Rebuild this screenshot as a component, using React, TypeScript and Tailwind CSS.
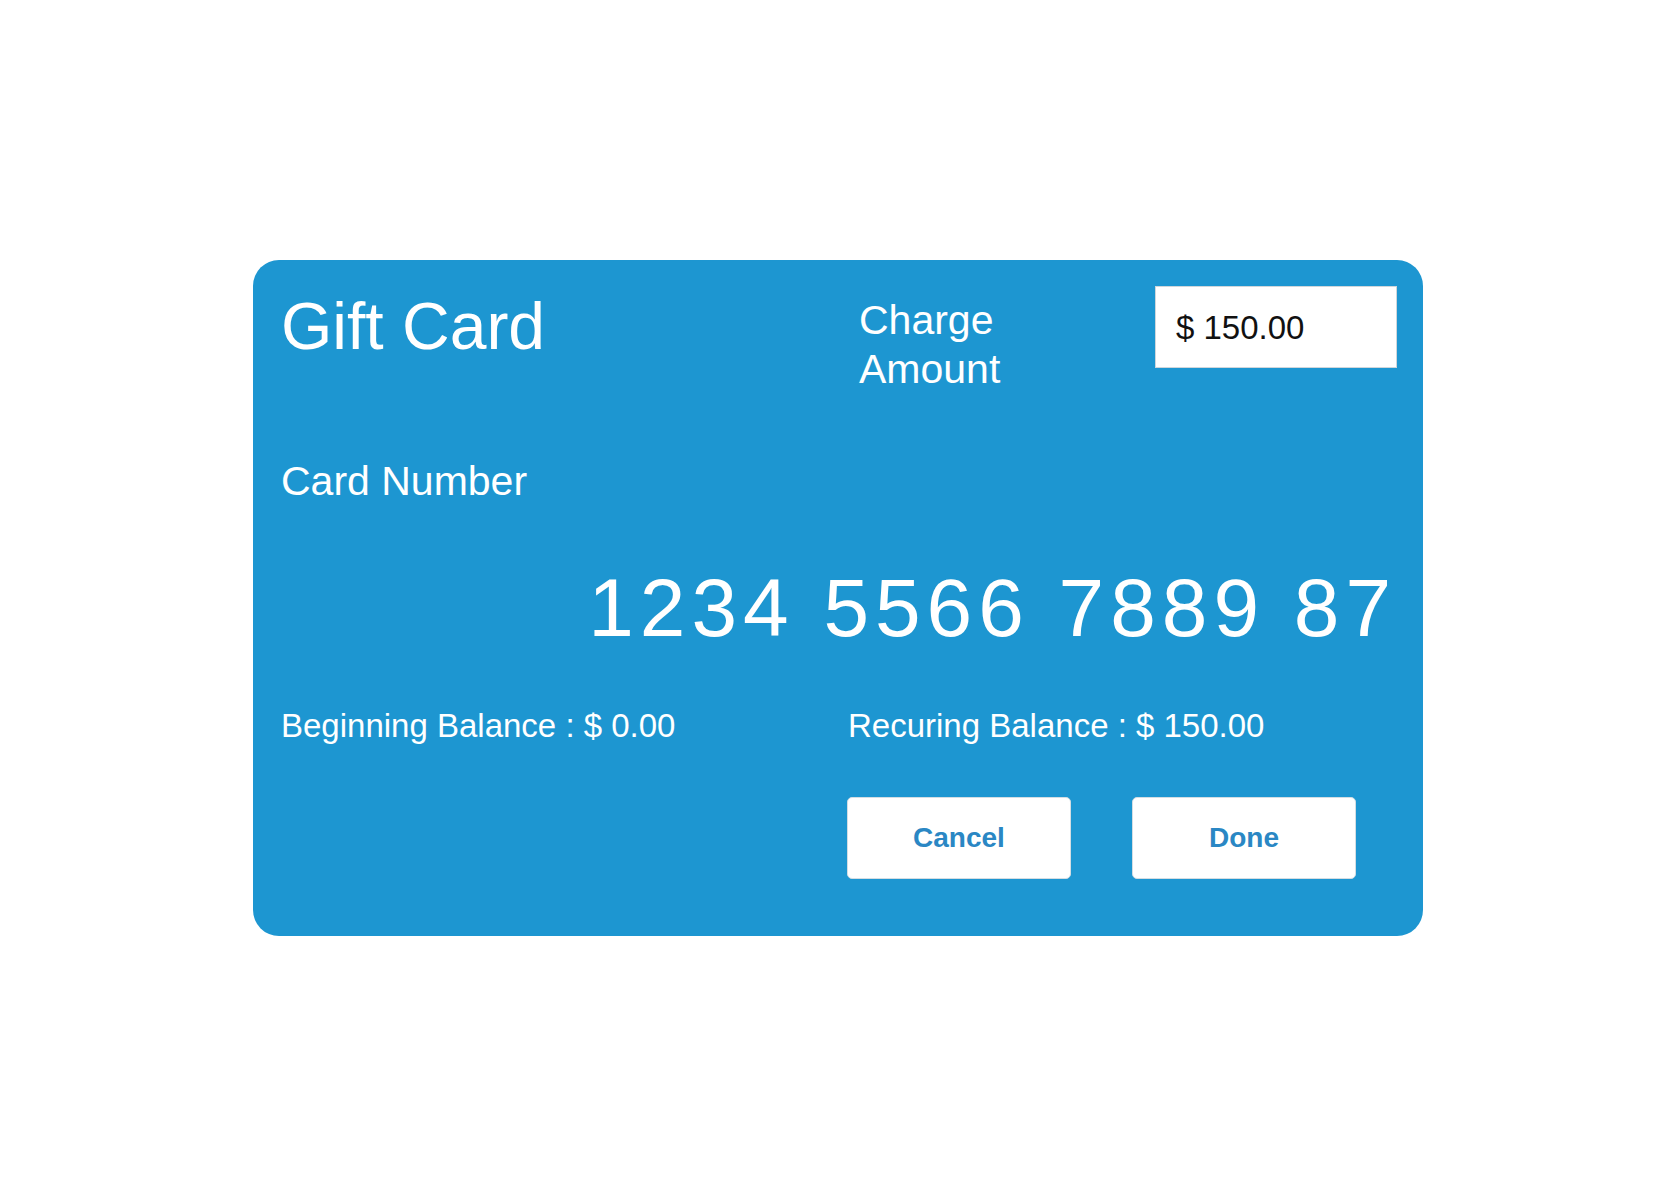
import React from "react";

export default function App() {
  return (
    <div className="flex h-[1200px] w-full items-center justify-center bg-white pb-[4px] font-['Liberation_Sans',Arial,sans-serif]">
      <div className="flex h-[676px] w-[1170px] flex-col rounded-[26px] bg-[#1d96d1] pl-[28px] pr-[26px] pt-[26px] text-white">
        <div className="flex items-start">
          <h1 className="mt-[7px] flex-1 text-[66px] font-normal leading-none">Gift Card</h1>
          <div className="mt-[10px] w-[296px] text-[41px] leading-[49px]">
            Charge
            <br />
            Amount
          </div>
          <div className="flex h-[82px] w-[242px] items-center border border-[#cfd6db] bg-white pl-[20px] text-[33px] leading-none text-[#111111]">
            $ 150.00
          </div>
        </div>

        <div className="mt-[67px] text-[41px] leading-none">Card Number</div>

        <div className="mt-[65px] text-right text-[82px] leading-none tracking-[6px]">
          1234 5566 7889 87
        </div>

        <div className="mt-[60px] flex text-[33px] leading-none">
          <div className="w-[567px]">Beginning Balance : $ 0.00</div>
          <div>Recuring Balance : $ 150.00</div>
        </div>

        <div className="ml-[566px] mt-[55px] flex gap-[61px]">
          <button className="flex h-[82px] w-[224px] items-center justify-center rounded-[5px] border border-[#d3dde3] bg-white text-[28px] font-semibold text-[#2a87c4]">
            Cancel
          </button>
          <button className="flex h-[82px] w-[224px] items-center justify-center rounded-[5px] border border-[#d3dde3] bg-white text-[28px] font-semibold text-[#2a87c4]">
            Done
          </button>
        </div>
      </div>
    </div>
  );
}
